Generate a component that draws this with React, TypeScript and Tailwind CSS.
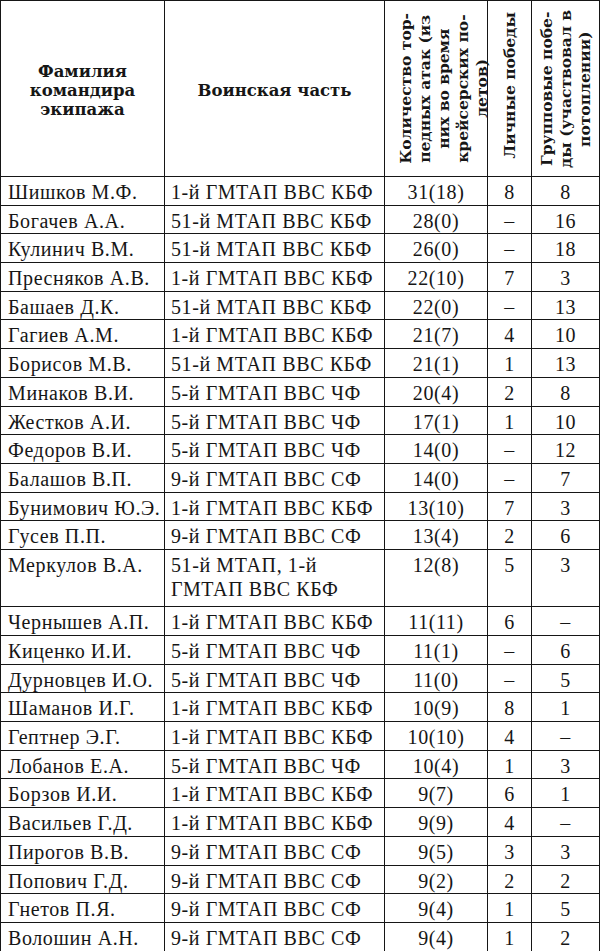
import React from 'react';

type Row = {
  name: string;
  unit: React.ReactNode;
  attacks: string;
  personal: string;
  group: string;
  tall?: boolean;
};

const rows: Row[] = [
  { name: 'Шишков М.Ф.', unit: '1-й ГМТАП ВВС КБФ', attacks: '31(18)', personal: '8', group: '8' },
  { name: 'Богачев А.А.', unit: '51-й МТАП ВВС КБФ', attacks: '28(0)', personal: '–', group: '16' },
  { name: 'Кулинич В.М.', unit: '51-й МТАП ВВС КБФ', attacks: '26(0)', personal: '–', group: '18' },
  { name: 'Пресняков А.В.', unit: '1-й ГМТАП ВВС КБФ', attacks: '22(10)', personal: '7', group: '3' },
  { name: 'Башаев Д.К.', unit: '51-й МТАП ВВС КБФ', attacks: '22(0)', personal: '–', group: '13' },
  { name: 'Гагиев А.М.', unit: '1-й ГМТАП ВВС КБФ', attacks: '21(7)', personal: '4', group: '10' },
  { name: 'Борисов М.В.', unit: '51-й МТАП ВВС КБФ', attacks: '21(1)', personal: '1', group: '13' },
  { name: 'Минаков В.И.', unit: '5-й ГМТАП ВВС ЧФ', attacks: '20(4)', personal: '2', group: '8' },
  { name: 'Жестков А.И.', unit: '5-й ГМТАП ВВС ЧФ', attacks: '17(1)', personal: '1', group: '10' },
  { name: 'Федоров В.И.', unit: '5-й ГМТАП ВВС ЧФ', attacks: '14(0)', personal: '–', group: '12' },
  { name: 'Балашов В.П.', unit: '9-й ГМТАП ВВС СФ', attacks: '14(0)', personal: '–', group: '7' },
  { name: 'Бунимович Ю.Э.', unit: '1-й ГМТАП ВВС КБФ', attacks: '13(10)', personal: '7', group: '3' },
  { name: 'Гусев П.П.', unit: '9-й ГМТАП ВВС СФ', attacks: '13(4)', personal: '2', group: '6' },
  {
    name: 'Меркулов В.А.',
    unit: (
      <>
        51-й МТАП, 1-й
        <br />
        ГМТАП ВВС КБФ
      </>
    ),
    attacks: '12(8)',
    personal: '5',
    group: '3',
    tall: true,
  },
  { name: 'Чернышев А.П.', unit: '1-й ГМТАП ВВС КБФ', attacks: '11(11)', personal: '6', group: '–' },
  { name: 'Киценко И.И.', unit: '5-й ГМТАП ВВС ЧФ', attacks: '11(1)', personal: '–', group: '6' },
  { name: 'Дурновцев И.О.', unit: '5-й ГМТАП ВВС ЧФ', attacks: '11(0)', personal: '–', group: '5' },
  { name: 'Шаманов И.Г.', unit: '1-й ГМТАП ВВС КБФ', attacks: '10(9)', personal: '8', group: '1' },
  { name: 'Гептнер Э.Г.', unit: '1-й ГМТАП ВВС КБФ', attacks: '10(10)', personal: '4', group: '–' },
  { name: 'Лобанов Е.А.', unit: '5-й ГМТАП ВВС ЧФ', attacks: '10(4)', personal: '1', group: '3' },
  { name: 'Борзов И.И.', unit: '1-й ГМТАП ВВС КБФ', attacks: '9(7)', personal: '6', group: '1' },
  { name: 'Васильев Г.Д.', unit: '1-й ГМТАП ВВС КБФ', attacks: '9(9)', personal: '4', group: '–' },
  { name: 'Пирогов В.В.', unit: '9-й ГМТАП ВВС СФ', attacks: '9(5)', personal: '3', group: '3' },
  { name: 'Попович Г.Д.', unit: '9-й ГМТАП ВВС СФ', attacks: '9(2)', personal: '2', group: '2' },
  { name: 'Гнетов П.Я.', unit: '9-й ГМТАП ВВС СФ', attacks: '9(4)', personal: '1', group: '5' },
  { name: 'Волошин А.Н.', unit: '9-й ГМТАП ВВС СФ', attacks: '9(4)', personal: '1', group: '2' },
];

const cols = 'grid grid-cols-[164px_220px_103px_44px_68px]';
const cell = 'border-r border-b border-[#161616]';
const rotated = '[writing-mode:vertical-rl] rotate-180 text-[15.5px] leading-[19px] text-center whitespace-nowrap';

const App: React.FC = () => {
  return (
    <div className="w-[600px] h-[951px] overflow-hidden bg-white text-[#161616] [font-family:Liberation_Serif,Times_New_Roman,serif]">
      <div className="border-t border-l border-[#161616]">
        {/* Header */}
        <div className={`${cols} h-[176px] font-bold [font-family:DejaVu_Serif,serif]`}>
          <div className={`${cell} flex items-center justify-center text-center text-[16.5px] leading-[19px] pt-[4px]`}>
            <div>
              Фамилия
              <br />
              командира
              <br />
              экипажа
            </div>
          </div>
          <div className={`${cell} flex items-center justify-center text-[16.5px] leading-[19px] pt-[4px]`}>
            Воинская часть
          </div>
          <div className={`${cell} flex items-center justify-center pl-[14px]`}>
            <div className={rotated}>
              Количество тор-
              <br />
              педных атак (из
              <br />
              них во время
              <br />
              крейсерских по-
              <br />
              летов)
            </div>
          </div>
          <div className={`${cell} flex flex-col items-center justify-start pt-[11px]`}>
            <div className={rotated}>Личные победы</div>
          </div>
          <div className={`${cell} flex items-center justify-center`}>
            <div className={rotated}>
              Групповые побе-
              <br />
              ды (участвовал в
              <br />
              потоплении)
            </div>
          </div>
        </div>

        {/* Body */}
        {rows.map((r) => (
          <div
            key={r.name}
            className={`${cols} text-[20px] leading-[24px] tracking-[0.03em] ${r.tall ? 'h-[57.4px]' : 'h-[28.7px]'}`}
          >
            <div className={`${cell} pl-[7px] pt-[3px] whitespace-nowrap`}>{r.name}</div>
            <div className={`${cell} pl-[6px] pt-[3px] whitespace-nowrap`}>{r.unit}</div>
            <div className={`${cell} pt-[3px] text-center`}>{r.attacks}</div>
            <div className={`${cell} pt-[3px] text-center`}>{r.personal}</div>
            <div className={`${cell} pt-[3px] text-center`}>{r.group}</div>
          </div>
        ))}
      </div>
    </div>
  );
};

export default App;
